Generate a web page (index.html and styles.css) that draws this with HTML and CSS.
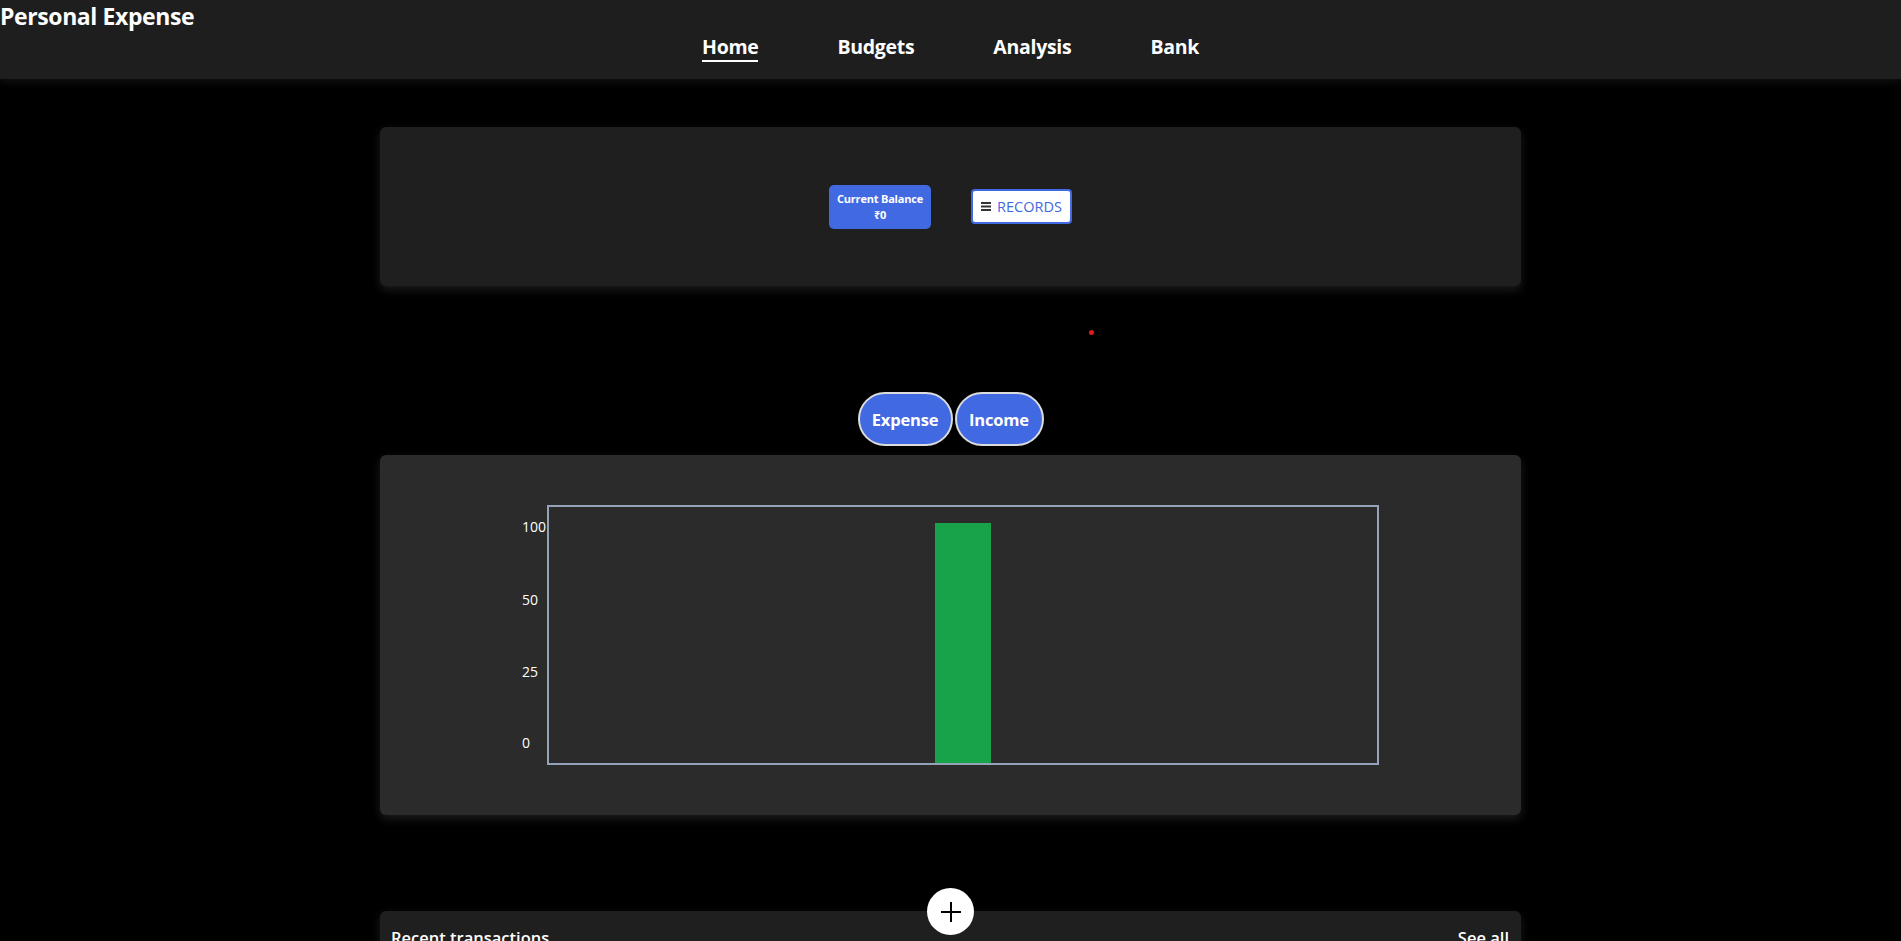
FILE: index.html
```html
<!DOCTYPE html>
<html lang="en">
<head>
<meta charset="utf-8">
<title>Personal Expense</title>
<link rel="stylesheet" href="styles.css">
</head>
<body>
<header class="topbar">
  <div class="brand">Personal Expense</div>
  <nav class="nav">
    <a class="nav-link active" href="#">Home</a>
    <a class="nav-link" href="#">Budgets</a>
    <a class="nav-link" href="#">Analysis</a>
    <a class="nav-link" href="#">Bank</a>
  </nav>
</header>

<main class="container">
  <section class="card summary">
    <button class="balance-btn">
      <span>Current Balance</span>
      <span>₹0</span>
    </button>
    <button class="records-btn">
      <svg class="bars" width="10" height="9" viewBox="0 0 10 9"><rect x="0" y="0" width="10" height="2"/><rect x="0" y="3.5" width="10" height="2"/><rect x="0" y="7" width="10" height="2"/></svg>
      <span>RECORDS</span>
    </button>
  </section>

  <div class="dot-row"><span class="dot"></span></div>

  <div class="toggles">
    <button class="pill">Expense</button>
    <button class="pill">Income</button>
  </div>

  <section class="card chart-card">
    <svg class="chart" width="1141" height="360" viewBox="0 0 1141 360">
      <rect x="168" y="51" width="830" height="258" fill="none" stroke="#94a3b8" stroke-width="2"/>
      <rect x="555" y="68" width="56" height="240" fill="#18a34a"/>
      <text x="142" y="77">100</text>
      <text x="142" y="150">50</text>
      <text x="142" y="222">25</text>
      <text x="142" y="293">0</text>
    </svg>
  </section>

  <section class="recent">
    <button class="fab" aria-label="Add">
      <svg width="22" height="22" viewBox="0 0 22 22"><path d="M11 1v20M1 11h20" stroke="#000" stroke-width="2" fill="none"/></svg>
    </button>
    <div class="card recent-card">
      <div class="recent-head">
        <span class="recent-title">Recent transactions</span>
        <a class="see-all" href="#">See all</a>
      </div>
    </div>
  </section>
</main>
</body>
</html>
```

FILE: styles.css
```css
html, body {
  margin: 0;
  padding: 0;
  background: #000;
  overflow: hidden;
}
body {
  font-family: "Open Sans", "Noto Sans", sans-serif;
  color: #fff;
}
button {
  font-family: inherit;
  cursor: pointer;
}
.topbar {
  height: 79px;
  background: #1e1e1e;
  box-shadow: 0 3px 8px rgba(20, 20, 20, 0.9);
  position: relative;
  z-index: 1;
}
.brand {
  font-size: 23px;
  font-weight: 700;
  line-height: 32px;
  color: #fff;
  letter-spacing: -0.4px;
}
.nav {
  display: flex;
  justify-content: center;
  gap: 79px;
  padding-top: 1px;
}
.nav-link {
  color: #fff;
  text-decoration: none;
  font-size: 19.5px;
  font-weight: 700;
  line-height: 27px;
  border-bottom: 2px solid transparent;
  letter-spacing: -0.3px;
}
.nav-link.active {
  border-bottom-color: #fff;
}
.container {
  width: 1141px;
  margin: 0 auto;
}
.card {
  border-radius: 6px;
  box-shadow: 0 4px 10px rgba(40, 40, 40, 0.7);
}
.summary {
  margin-top: 48px;
  height: 159px;
  background: #1f1f1f;
  display: flex;
  justify-content: center;
  align-items: center;
  gap: 40px;
}
.balance-btn {
  width: 102px;
  height: 44px;
  border: none;
  border-radius: 5px;
  background: #4169e1;
  color: #fff;
  font-size: 11px;
  font-weight: 700;
  line-height: 16px;
  letter-spacing: -0.2px;
  display: flex;
  flex-direction: column;
  align-items: center;
  justify-content: center;
  padding: 0;
}
.records-btn {
  width: 101px;
  height: 35px;
  border: 2px solid #4169e1;
  border-radius: 4px;
  background: #fff;
  color: #4169e1;
  font-size: 14.5px;
  display: flex;
  align-items: center;
  justify-content: center;
  gap: 6px;
  padding: 0;
}
.bars {
  fill: #333;
}
.dot-row {
  height: 106px;
  display: flex;
}
.dot {
  width: 5px;
  height: 5px;
  border-radius: 50%;
  background: #e5191c;
  margin: 44px 0 0 709px;
}
.toggles {
  display: flex;
  justify-content: center;
  gap: 2px;
}
.pill {
  height: 54px;
  border: 2px solid #dcdcdc;
  border-radius: 27px;
  background: #4169e1;
  color: #fff;
  font-size: 16.5px;
  font-weight: 700;
  padding: 0 10px;
  letter-spacing: -0.2px;
}
.pill:first-child { width: 95px; }
.pill:last-child { width: 89px; }
.chart-card {
  margin-top: 9px;
  height: 360px;
  background: #2b2b2b;
}
.chart {
  display: block;
}
.chart text {
  fill: #fff;
  font-family: "Open Sans", sans-serif;
  font-size: 14px;
}
.recent {
  margin-top: 96px;
  position: relative;
}
.fab {
  position: absolute;
  top: -23px;
  left: 547px;
  width: 47px;
  height: 47px;
  border-radius: 50%;
  border: none;
  background: #fff;
  display: flex;
  align-items: center;
  justify-content: center;
  padding: 0;
  z-index: 2;
}
.recent-card {
  background: #1f1f1f;
  min-height: 160px;
  padding: 15px 12px 0 11px;
}
.recent-head {
  display: flex;
  justify-content: space-between;
  align-items: center;
}
.recent-title, .see-all {
  font-size: 16.5px;
  font-weight: 600;
  line-height: 24px;
  color: #fff;
  text-decoration: none;
}
```
